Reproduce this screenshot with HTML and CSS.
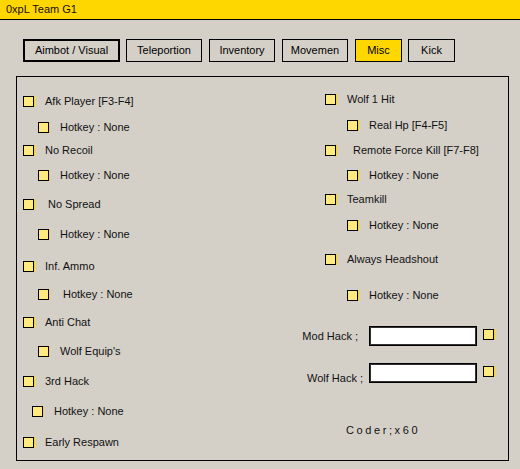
FILE: index.html
```html
<!DOCTYPE html>
<html lang="en">
<head>
    <meta charset="UTF-8">
    <title>0xpL Team G1</title>
    <link rel="stylesheet" href="styles.css">
</head>
<body>
    <!-- title bar -->
    <div class="titlebar">0xpL Team G1</div>

    <!-- tab buttons -->
    <div class="tabs">
        <div class="tab tab-aim">Aimbot / Visual</div>
        <div class="tab tab-tele">Teleportion</div>
        <div class="tab tab-mid">Inventory</div>
        <div class="tab tab-mid">Movemen</div>
        <div class="tab tab-small tab-on">Misc</div>
        <div class="tab tab-small">Kick</div>
    </div>

    <!-- misc page -->
    <div class="panel">
        <div class="colLeft">
            <div class="opt"><span class="box"></span><span class="txt">Afk Player [F3-F4]</span></div>
            <div class="opt sub"><span class="box"></span><span class="txt">Hotkey : None</span></div>
            <div class="opt"><span class="box"></span><span class="txt">No Recoil</span></div>
            <div class="opt sub"><span class="box"></span><span class="txt">Hotkey : None</span></div>
            <div class="opt"><span class="box"></span><span class="txt far">No Spread</span></div>
            <div class="opt sub"><span class="box"></span><span class="txt">Hotkey : None</span></div>
            <div class="opt"><span class="box"></span><span class="txt">Inf. Ammo</span></div>
            <div class="opt sub"><span class="box"></span><span class="txt far">Hotkey : None</span></div>
            <div class="opt"><span class="box"></span><span class="txt">Anti Chat</span></div>
            <div class="opt sub"><span class="box"></span><span class="txt">Wolf Equip's</span></div>
            <div class="opt"><span class="box"></span><span class="txt">3rd Hack</span></div>
            <div class="opt half"><span class="box"></span><span class="txt">Hotkey : None</span></div>
            <div class="opt"><span class="box"></span><span class="txt">Early Respawn</span></div>
        </div>

        <div class="colRight">
            <div class="opt"><span class="box"></span><span class="txt">Wolf 1 Hit</span></div>
            <div class="opt sub"><span class="box"></span><span class="txt">Real Hp [F4-F5]</span></div>
            <div class="opt"><span class="box"></span><span class="txt farther">Remote Force Kill [F7-F8]</span></div>
            <div class="opt sub"><span class="box"></span><span class="txt">Hotkey : None</span></div>
            <div class="opt"><span class="box"></span><span class="txt">Teamkill</span></div>
            <div class="opt sub"><span class="box"></span><span class="txt">Hotkey : None</span></div>
            <div class="opt"><span class="box"></span><span class="txt">Always Headshout</span></div>
            <div class="opt sub"><span class="box"></span><span class="txt">Hotkey : None</span></div>
            <div class="field">
                <span class="fieldName">Mod Hack ;</span>
                <input class="fieldInput" type="text">
                <span class="box"></span>
            </div>
            <div class="field">
                <span class="fieldName low">Wolf Hack ;</span>
                <input class="fieldInput" type="text">
                <span class="box"></span>
            </div>
            <div class="coder">Coder;x60</div>
        </div>
    </div>
</body>
</html>
```

FILE: styles.css
```css
/* classic winforms look */
body { margin: 0; background-color: #d4d0c8; font: 11px "Liberation Sans", Arial, sans-serif; color: #111; }

.titlebar { height: 19px; line-height: 18px; padding-left: 6px; background-color: #ffd700; border-bottom: 1px solid #000; color: #1a0a0a; }

/** tabs */
.tabs { display: flex; gap: 6px; margin: 19px 0 0 23px; }
.tab { box-sizing: border-box; height: 23px; line-height: 21px; border: 1px solid #000; text-align: center; color: #000; }
.tab-aim { width: 97px; border-width: 2px; line-height: 19px; }
.tab-tele { width: 76px; }
.tab-mid { width: 66px; margin-left: 1px; }
.tab-small { width: 47px; }
.tab-on { background-color: #ffd700; margin-left: 1px; }

/** group panel */
.panel { box-sizing: border-box; width: 493px; height: 385px; margin: 14px 0 0 16px; border: 1px solid #000;
         display: grid; grid-template-columns: 277px 1fr; padding-left: 6px; }

.colLeft { display: grid; padding-top: 14px; align-content: start;
           grid-template-rows: 26px 23px 25px 29px 30px 32px 28px 28px 29px 30px 30px 31px 20px; }
.colRight { display: grid; padding-top: 12px; align-content: start;
            grid-template-rows: 26px 25px 25px 24px 26px 34px 36px 41px 37px 57px 20px; }

/** checkbox rows */
.opt { display: flex; align-items: center; height: 20px; }
.colRight .opt { padding-left: 25px; }
.opt.sub { padding-left: 15px; }
.colRight .opt.sub { padding-left: 47px; }
.opt.half { padding-left: 9px; }

.box { flex: none; width: 9px; height: 9px; border: 1px solid #000; background-color: #ffea80; box-shadow: 1px 0 0 #ffd700; }
.txt { margin-left: 11px; white-space: nowrap; }
.txt.far { margin-left: 14px; }
.txt.farther { margin-left: 17px; }

/** text fields */
.field { display: flex; align-items: flex-start; height: 20px; }
.fieldName { box-sizing: border-box; width: 69px; padding-right: 11px; text-align: right; line-height: 20px; white-space: nowrap; }
.fieldName.low { padding-right: 6px; line-height: 30px; }
.fieldInput { box-sizing: border-box; width: 108px; height: 20px; margin: 0; padding: 0; border: 1px solid #000; box-shadow: inset 0 0 0 1px #333; background-color: #fff; }
.field .box { margin: 3px 0 0 6px; }

.coder { padding-left: 46px; line-height: 20px; letter-spacing: 2.6px; }
```
